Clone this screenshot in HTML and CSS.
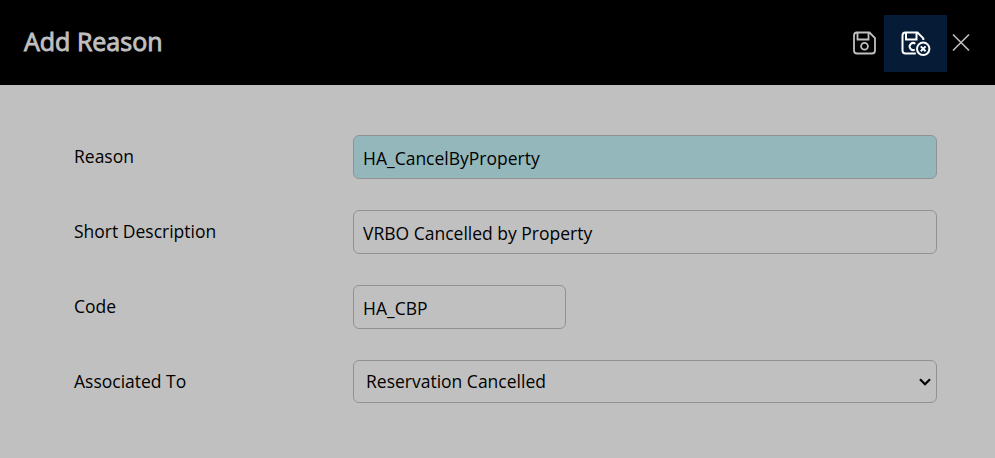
FILE: index.html
```html
<!DOCTYPE html>
<html lang="en">
<head>
<meta charset="utf-8">
<title>Add Reason</title>
<link rel="stylesheet" href="styles.css">
</head>
<body>
<header class="header">
  <h1 class="title">Add Reason</h1>
  <div class="actions">
    <button class="action" type="button" aria-label="Save">
      <svg class="icon-save" viewBox="0 0 24 24"><path d="M5 1.5H17.5L23 7V19.5Q23 22.5 20 22.5H5Q2 22.5 2 19.5V4.5Q2 1.5 5 1.5ZM5.5 1.5V8.5H16.5V1.5"/><circle cx="12.5" cy="15.3" r="3.4"/></svg>
    </button>
    <button class="action action-active" type="button" aria-label="Save and close">
      <svg class="icon-save-close" viewBox="0 0 30 25"><path d="M14.8 22.5H4.5Q1.5 22.5 1.5 19.5V4.5Q1.5 1.5 4.5 1.5H16.5L22.3 7.3V9M5 1.5V8.5H15.5V1.5M14.3 12.7A3.5 3.5 0 1 0 13.8 18.6"/><circle cx="22.2" cy="17.8" r="6.2"/><path d="M19.8 15.4L24.6 20.2M24.6 15.4L19.8 20.2"/></svg>
    </button>
    <button class="action" type="button" aria-label="Close">
      <svg class="icon-close" viewBox="0 0 17 17"><path d="M1 .5L17 16.5M17 .5L1 16.5"/></svg>
    </button>
  </div>
</header>
<main class="form">
  <div class="row"><label class="label" for="reason">Reason</label><input class="field field-required" id="reason" value="HA_CancelByProperty"></div>
  <div class="row"><label class="label" for="description">Short Description</label><input class="field" id="description" value="VRBO Cancelled by Property"></div>
  <div class="row"><label class="label" for="code">Code</label><input class="field field-short" id="code" value="HA_CBP"></div>
  <div class="row"><label class="label" for="associated">Associated To</label>
    <div class="select" id="associated"><span class="value">Reservation Cancelled</span><svg class="chevron" viewBox="0 0 12 8"><path d="M1 1.2L6 6.2L11 1.2"/></svg></div>
  </div>
</main>
</body>
</html>
```
FILE: styles.css
```css
* { box-sizing: border-box; }
body {
  margin: 0;
  height: 458px;
  overflow: hidden;
  background: #c0c0c0;
  color: #000;
  font: 17.5px/24px "Open Sans", "Noto Sans", sans-serif;
}
.header {
  height: 85px;
  padding: 0 26px 0 24px;
  display: flex;
  align-items: center;
  justify-content: space-between;
  background: #000;
}
.title {
  margin: 0 0 3px;
  color: #c0c0c0;
  font-size: 25px;
  line-height: 34px;
  font-weight: 400;
  -webkit-text-stroke: .9px #c0c0c0;
}
.actions { display: flex; align-items: center; height: 57px; margin-top: 2px; }
.action {
  display: flex;
  align-items: center;
  height: 57px;
  padding: 0 0 2px;
  border: 0;
  background: none;
  color: #c0c0c0;
}
.action-active {
  width: 63px;
  margin: 0 5px 0 8px;
  padding-left: 17px;
  padding-bottom: 1px;
  background: #051b36;
  color: #fff;
}
.action svg { fill: none; stroke: currentColor; stroke-width: 2; overflow: visible; }
.action .icon-save { width: 24px; height: 24px; stroke-width: 1.8; }
.action .icon-save-close { width: 30px; height: 25px; }
.action .icon-close { width: 17px; height: 17px; stroke-width: 1.6; }
.form {
  display: grid;
  gap: 31px;
  padding: 50px 58px 0 74px;
}
.row { display: flex; height: 44px; align-items: center; }
.label { width: 279px; padding-bottom: 2px; }
.field, .select {
  width: 584px;
  height: 44px;
  border: 1px solid #929292;
  border-radius: 6px;
  background: transparent;
  color: #000;
  font: inherit;
}
.field { padding: 1px 9px 0; outline: 0; }
.field-required { background: #94b7bb; }
.field-short { width: 213px; }
.select {
  display: flex;
  align-items: center;
  justify-content: space-between;
  height: 43px;
  align-self: flex-start;
  padding: 0 5px 0 12px;
}
.value { padding-bottom: 2px; }
.chevron { width: 12px; height: 8px; fill: none; stroke: #000; stroke-width: 2.2; }
```
